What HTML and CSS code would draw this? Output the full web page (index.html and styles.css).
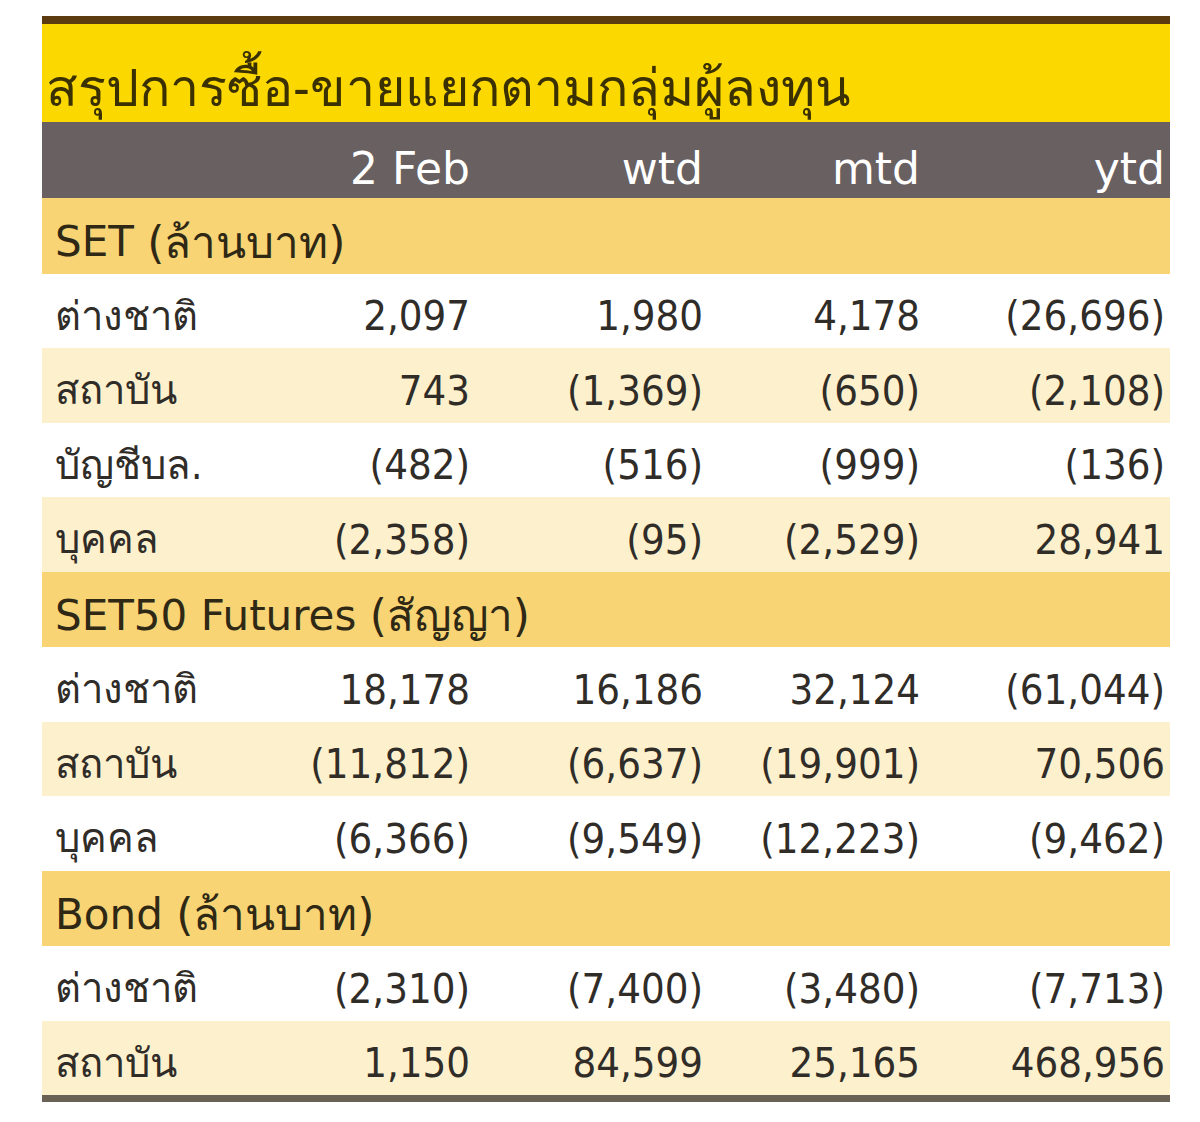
FILE: index.html
```html
<!DOCTYPE html>
<html lang="th">
<head>
<meta charset="utf-8">
<link rel="stylesheet" href="styles.css">
</head>
<body>
<div class="wrap">
  <div class="title">สรุปการซื้อ-ขายแยกตามกลุ่มผู้ลงทุน</div>
  <div class="row head">
    <div class="lbl"></div><div>2 Feb</div><div>wtd</div><div>mtd</div><div>ytd</div>
  </div>
  <div class="section">SET&nbsp;<span class="th">(ล้านบาท)</span></div>
  <div class="row"><div class="lbl">ต่างชาติ</div><div>2,097</div><div>1,980</div><div>4,178</div><div>(26,696)</div></div>
  <div class="row alt"><div class="lbl">สถาบัน</div><div>743</div><div>(1,369)</div><div>(650)</div><div>(2,108)</div></div>
  <div class="row"><div class="lbl">บัญชีบล.</div><div>(482)</div><div>(516)</div><div>(999)</div><div>(136)</div></div>
  <div class="row alt"><div class="lbl">บุคคล</div><div>(2,358)</div><div>(95)</div><div>(2,529)</div><div>28,941</div></div>
  <div class="section">SET50 Futures&nbsp;<span class="th">(สัญญา)</span></div>
  <div class="row"><div class="lbl">ต่างชาติ</div><div>18,178</div><div>16,186</div><div>32,124</div><div>(61,044)</div></div>
  <div class="row alt"><div class="lbl">สถาบัน</div><div>(11,812)</div><div>(6,637)</div><div>(19,901)</div><div>70,506</div></div>
  <div class="row"><div class="lbl">บุคคล</div><div>(6,366)</div><div>(9,549)</div><div>(12,223)</div><div>(9,462)</div></div>
  <div class="section">Bond&nbsp;<span class="th">(ล้านบาท)</span></div>
  <div class="row"><div class="lbl">ต่างชาติ</div><div>(2,310)</div><div>(7,400)</div><div>(3,480)</div><div>(7,713)</div></div>
  <div class="row alt"><div class="lbl">สถาบัน</div><div>1,150</div><div>84,599</div><div>25,165</div><div>468,956</div></div>
</div>
</body>
</html>
```
FILE: styles.css
```css
html, body { margin: 0; padding: 0; background: #ffffff; }
body { font-family: "DejaVu Sans Condensed", "DejaVu Sans", "Noto Sans", sans-serif; color: #302c28; }
.wrap {
  margin: 16px 0 0 42px;
  width: 1128px;
  border-top: 8px solid #5c3b10;
  border-bottom: 7px solid #6a6255;
}
.title {
  background: #fad800;
  height: 98px;
  box-sizing: border-box;
  padding: 34px 0 0 4px;
  font-size: 52px;
  line-height: 60px;
  color: #3a3000;
  white-space: nowrap;
}
.row {
  display: grid;
  grid-template-columns: 200px 228px 233px 217px 245px;
  height: 74.5px;
  box-sizing: border-box;
  padding-top: 10px;
  align-items: center;
  font-size: 41.5px;
  background: #ffffff;
}
.row > div { text-align: right; white-space: nowrap; }
.row > .lbl { text-align: left; padding-left: 13px; font-size: 40px; }
.row.alt { background: #fdf0cc; }
.row.head {
  background: #686061;
  color: #ffffff;
  height: 76px;
  padding-top: 16px;
  font-family: "DejaVu Sans", sans-serif;
  font-size: 44px;
}
.section {
  background: #f8d474;
  height: 75.5px;
  box-sizing: border-box;
  padding: 12px 0 0 13px;
  display: flex;
  align-items: center;
  font-family: "DejaVu Sans", sans-serif;
  font-size: 42px;
  color: #2e2814;
  white-space: nowrap;
}
.section .th { font-size: 44px; }
```
